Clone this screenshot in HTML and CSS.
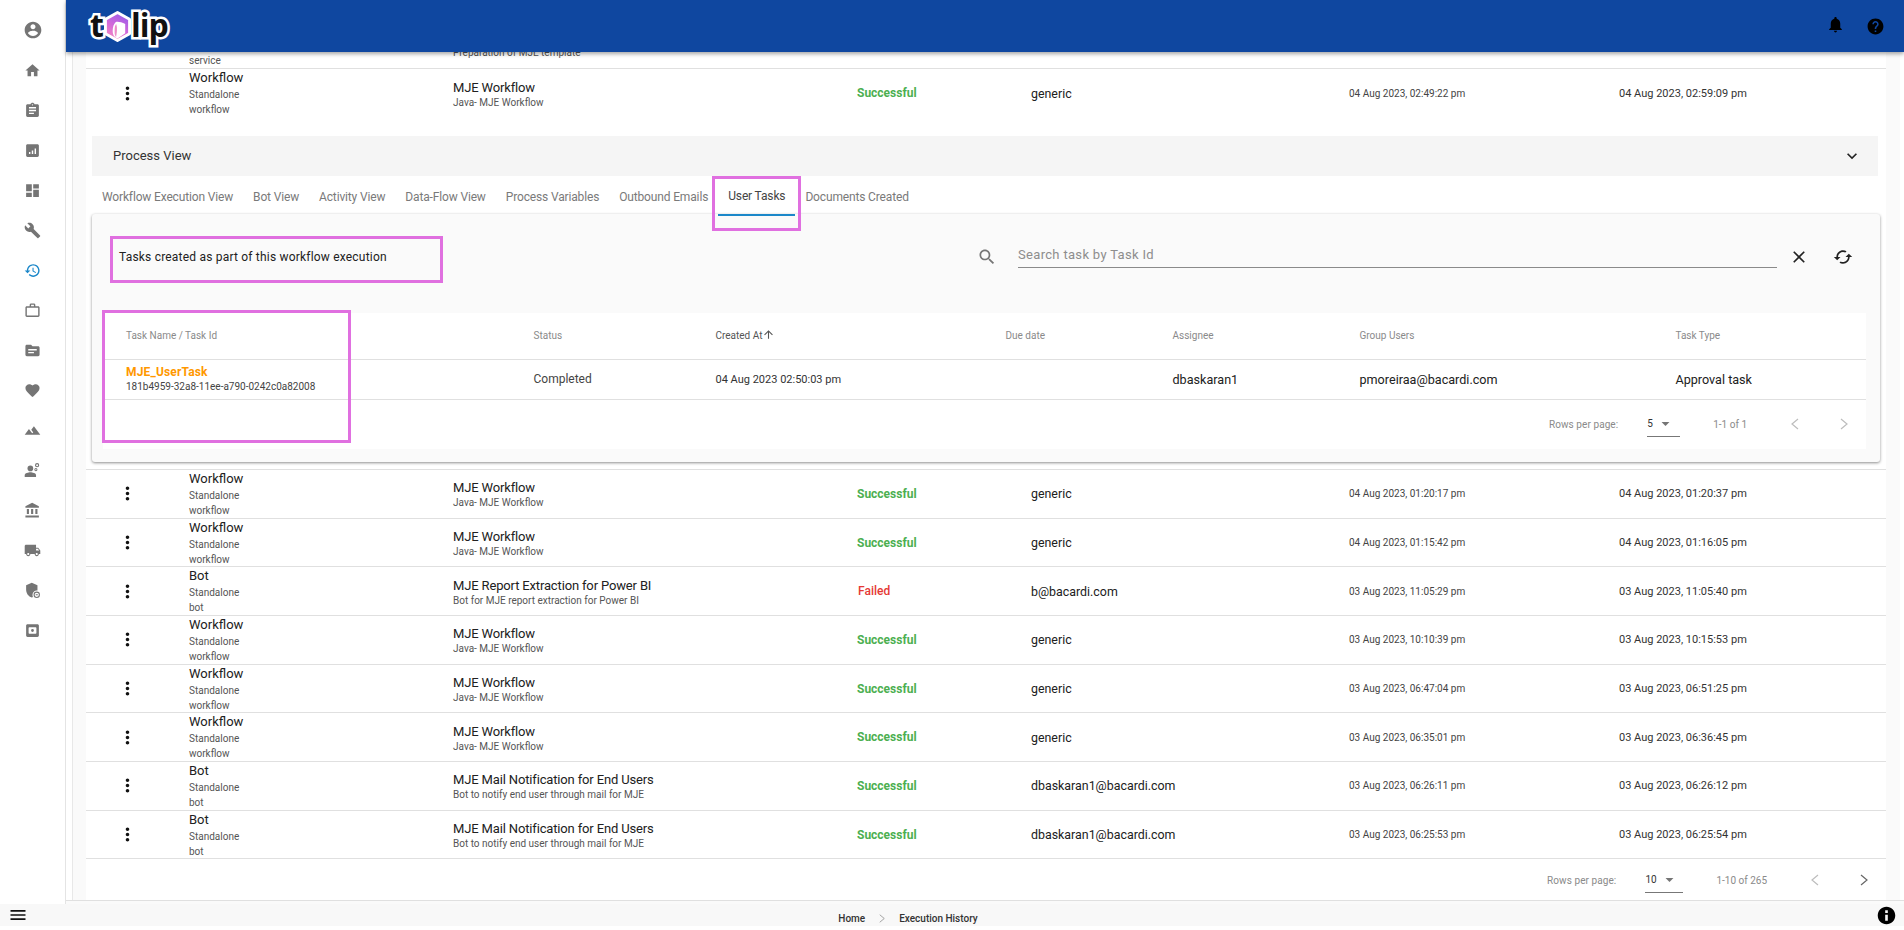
FILE: index.html
```html
<!DOCTYPE html>
<html lang="en">
<head>
<meta charset="utf-8">
<title>Execution History</title>
<link rel="stylesheet" href="styles.css">
</head>
<body>
<svg class="sprite" aria-hidden="true">
  <symbol id="i-more" viewBox="0 0 24 24"><path d="M12 8c1.1 0 2-.9 2-2s-.9-2-2-2-2 .9-2 2 .9 2 2 2zm0 2c-1.1 0-2 .9-2 2s.9 2 2 2 2-.9 2-2-.9-2-2-2zm0 6c-1.1 0-2 .9-2 2s.9 2 2 2 2-.9 2-2-.9-2-2-2z"/></symbol>
  <symbol id="i-arrow" viewBox="0 0 24 24"><path d="M7 10l5 5 5-5z"/></symbol>
</svg>

<div class="app">
  <nav class="sidebar">
    <a class="nav-item nav-first"><svg class="nav-icon nav-icon-lg" viewBox="0 0 24 24"><path d="M12 2C6.48 2 2 6.48 2 12s4.48 10 10 10 10-4.48 10-10S17.52 2 12 2zm0 3c1.66 0 3 1.34 3 3s-1.34 3-3 3-3-1.34-3-3 1.34-3 3-3zm0 14.2c-2.5 0-4.71-1.28-6-3.22.03-1.99 4-3.08 6-3.08 1.99 0 5.97 1.09 6 3.08-1.29 1.94-3.5 3.22-6 3.22z"/></svg></a>
    <a class="nav-item"><svg class="nav-icon" viewBox="0 0 24 24"><path d="M10 20v-6h4v6h5v-8h3L12 3 2 12h3v8z"/></svg></a>
    <a class="nav-item"><svg class="nav-icon" viewBox="0 0 24 24"><path d="M19 3h-4.18C14.4 1.84 13.3 1 12 1c-1.3 0-2.4.84-2.82 2H5c-1.1 0-2 .9-2 2v14c0 1.1.9 2 2 2h14c1.1 0 2-.9 2-2V5c0-1.1-.9-2-2-2zm-7 0c.55 0 1 .45 1 1s-.45 1-1 1-1-.45-1-1 .45-1 1-1zm2 14H7v-2h7v2zm3-4H7v-2h10v2zm0-4H7V7h10v2z"/></svg></a>
    <a class="nav-item"><svg class="nav-icon" viewBox="0 0 24 24"><path d="M19 3H5c-1.1 0-2 .9-2 2v14c0 1.1.9 2 2 2h14c1.1 0 2-.9 2-2V5c0-1.1-.9-2-2-2zM9 17H7v-3h2v3zm4 0h-2v-5h2v5zm4 0h-2V9h2v8z"/></svg></a>
    <a class="nav-item"><svg class="nav-icon" viewBox="0 0 24 24"><path d="M3 13h8V3H3v10zm0 8h8v-6H3v6zm10 0h8V11h-8v10zm0-18v6h8V3h-8z"/></svg></a>
    <a class="nav-item"><svg class="nav-icon" viewBox="0 0 24 24"><path d="M22.7 19l-9.1-9.1c.9-2.3.4-5-1.5-6.9-2-2-5-2.4-7.4-1.3L9 6 6 9 1.6 4.7C.4 7.1.9 10.1 2.9 12.1c1.9 1.9 4.6 2.4 6.9 1.5l9.1 9.1c.4.4 1 .4 1.4 0l2.3-2.3c.5-.4.5-1.1.1-1.4z"/></svg></a>
    <a class="nav-item nav-active"><svg class="nav-icon" viewBox="0 0 24 24"><path d="M13 3c-4.97 0-9 4.03-9 9H1l3.89 3.89.07.14L9 12H6c0-3.87 3.13-7 7-7s7 3.13 7 7-3.13 7-7 7c-1.93 0-3.68-.79-4.94-2.06l-1.42 1.42C8.27 19.99 10.51 21 13 21c4.97 0 9-4.03 9-9s-4.03-9-9-9zm-1 5v5l4.28 2.54.72-1.21-3.5-2.08V8H12z"/></svg></a>
    <a class="nav-item"><svg class="nav-icon" viewBox="0 0 24 24"><path d="M14 6V4h-4v2h4zM4 8v11h16V8H4zm16-2c1.11 0 2 .89 2 2v11c0 1.11-.89 2-2 2H4c-1.11 0-2-.89-2-2l.01-11c0-1.11.88-2 1.99-2h4V4c0-1.11.89-2 2-2h4c1.11 0 2 .89 2 2v2h4z"/></svg></a>
    <a class="nav-item"><svg class="nav-icon" viewBox="0 0 24 24"><path d="M20 6h-8l-2-2H4c-1.1 0-1.99.9-1.99 2L2 18c0 1.1.9 2 2 2h16c1.1 0 2-.9 2-2V8c0-1.1-.9-2-2-2zm-6 10H6v-2h8v2zm4-4H6v-2h12v2z"/></svg></a>
    <a class="nav-item"><svg class="nav-icon" viewBox="0 0 24 24"><path d="M12 21.35l-1.45-1.32C5.4 15.36 2 12.28 2 8.5 2 5.42 4.42 3 7.5 3c1.74 0 3.41.81 4.5 2.09C13.09 3.81 14.76 3 16.5 3 19.58 3 22 5.42 22 8.5c0 3.78-3.4 6.86-8.55 11.54L12 21.35z"/></svg></a>
    <a class="nav-item"><svg class="nav-icon" viewBox="0 0 24 24"><path d="M14 6l-3.75 5 2.85 3.8-1.6 1.2C9.81 13.75 7 10 7 10l-6 8h22L14 6z"/></svg></a>
    <a class="nav-item"><svg class="nav-icon" viewBox="0 0 24 24"><circle cx="9" cy="9" r="4"/><path d="M9 14.5c-2.67 0-8 1.34-8 4V21h16v-2.5c0-2.66-5.33-4-8-4z"/><path d="M18.5 1.5a3 3 0 100 6 3 3 0 000-6zm0 1.6a1.4 1.4 0 110 2.8 1.4 1.4 0 010-2.8zM16.8 8.5a2.2 2.2 0 100 4.4 2.2 2.2 0 000-4.4zm0 1.3a.9.9 0 110 1.8.9.9 0 010-1.8z"/></svg></a>
    <a class="nav-item"><svg class="nav-icon" viewBox="0 0 24 24"><path d="M4 10v7h3v-7H4zm6 0v7h3v-7h-3zM2 22h19v-3H2v3zm14-12v7h3v-7h-3zm-4.5-9L2 6v2h19V6l-9.5-5z"/></svg></a>
    <a class="nav-item"><svg class="nav-icon" viewBox="0 0 24 24"><path d="M20 8h-3V4H3c-1.1 0-2 .9-2 2v11h2c0 1.66 1.34 3 3 3s3-1.34 3-3h6c0 1.66 1.34 3 3 3s3-1.34 3-3h2v-5l-3-4zM6 18.5c-.83 0-1.5-.67-1.5-1.5s.67-1.5 1.5-1.5 1.5.67 1.5 1.5-.67 1.5-1.5 1.5zm13.5-9l1.96 2.5H17V9.5h2.5zm-1.5 9c-.83 0-1.5-.67-1.5-1.5s.67-1.5 1.5-1.5 1.5.67 1.5 1.5-.67 1.5-1.5 1.5z"/></svg></a>
    <a class="nav-item"><svg class="nav-icon" viewBox="0 0 24 24"><path d="M11 1L3 4.5V11c0 5 3.4 9.7 8 11 .6-.2 1.2-.4 1.7-.7A6 6 0 0112 18a6 6 0 017-5.9V4.500L11 1z"/><path d="M18 13.500a4.500 4.500 0 100 9 4.500 4.500 0 000-9zm0 1.500a3 3 0 110 6 3 3 0 010-6zm-1.500 2.300h3v1.400h-3z"/></svg></a>
    <a class="nav-item"><svg class="nav-icon" viewBox="0 0 24 24"><path fill-rule="evenodd" d="M5 3h14c1.100 0 2 .9 2 2v14c0 1.100-.9 2-2 2H5c-1.100 0-2-.9-2-2V5c0-1.100.9-2 2-2zm1.500 5.500v7c0 .6.400 1 1 1h9c.6 0 1-.4 1-1v-7c0-.6-.4-1-1-1h-9c-.6 0-1 .4-1 1zM12 10a2 2 0 110 4 2 2 0 010-4z"/></svg></a>
  </nav>

  <div class="main">
    <header class="topbar">
      <div class="logo">
        <span class="logo-text">t</span>
        <svg class="logo-mark" viewBox="0 0 28 32">
          <defs><linearGradient id="logo-grad" x1="0.7" y1="0" x2="0.2" y2="1"><stop offset="0" stop-color="#9a5bea"/><stop offset=".55" stop-color="#d66ad8"/><stop offset="1" stop-color="#f78cc0"/></linearGradient></defs>
          <path d="M14 1.500L26.500 8.500v15L14 30.500 1.500 23.500v-15z" fill="url(#logo-grad)" stroke="#fff" stroke-width="3" stroke-linejoin="round"/>
          <path d="M14 28.500c-3-1-5-3-5-8 0-4 1-7 3-9 2-1 6 0 10 2v9.500z" fill="#fff"/>
          <path d="M12.500 27c-1.500-1.500-1.500-4-1.500-7 0-3 .5-5 1.500-6.500 1 2 1.500 6 0 13.500z" fill="#ec8cc8"/>
        </svg>
        <span class="logo-text">lip</span>
      </div>
      <div class="topbar-actions">
        <svg class="bar-icon bar-icon-bell" viewBox="0 0 24 24"><path d="M12 22c1.100 0 2-.9 2-2h-4c0 1.100.89 2 2 2zm6-6v-5c0-3.070-1.640-5.640-4.500-6.320V4c0-.83-.67-1.500-1.500-1.500s-1.500.67-1.500 1.500v.68C7.630 5.360 6 7.920 6 11v5l-2 2v1h16v-1l-2-2z"/></svg>
        <svg class="bar-icon bar-icon-help" viewBox="0 0 24 24"><path d="M12 2C6.480 2 2 6.480 2 12s4.480 10 10 10 10-4.480 10-10S17.520 2 12 2zm1 17h-2v-2h2v2zm2.070-7.750l-.9.92C13.450 12.900 13 13.500 13 15h-2v-.5c0-1.100.45-2.100 1.170-2.830l1.240-1.260c.37-.36.59-.86.59-1.410 0-1.100-.9-2-2-2s-2 .9-2 2H8c0-2.210 1.790-4 4-4s4 1.790 4 4c0 .88-.36 1.680-.93 2.250z"/></svg>
      </div>
    </header>

    <div class="viewport">
      <div class="gutter">
        <section class="sheet">
          <div class="row row-clipped">
            <span></span>
            <p class="sub">service</p>
            <p class="sub sub-clipped">Preparation of MJE template</p>
          </div>

          <div class="row row-open">
            <button class="kebab"><svg viewBox="0 0 24 24"><use href="#i-more"/></svg></button>
            <div class="type"><p class="title">Workflow</p><p class="sub">Standalone workflow</p></div>
            <div class="name"><p class="title">MJE Workflow</p><p class="sub">Java- MJE Workflow</p></div>
            <span class="status ok">Successful</span>
            <span class="cell">generic</span>
            <span class="date">04 Aug 2023, 02:49:22 pm</span>
            <span class="date-end">04 Aug 2023, 02:59:09 pm</span>
          </div>

          <div class="detail">
            <div class="accordion">
              <span>Process View</span>
              <svg class="accordion-icon" viewBox="0 0 24 24"><path d="M16.590 8.590L12 13.170 7.410 8.590 6 10l6 6 6-6z"/></svg>
            </div>
            <div class="tabs">
              <span class="tab">Workflow Execution View</span>
              <span class="tab">Bot View</span>
              <span class="tab">Activity View</span>
              <span class="tab">Data-Flow View</span>
              <span class="tab">Process Variables</span>
              <span class="tab">Outbound Emails</span>
              <span class="tab tab-active">User Tasks<i class="mark mark-tab"></i></span>
              <span class="tab">Documents Created</span>
            </div>
            <div class="card">
              <i class="mark mark-heading"></i>
              <div class="card-head">
                <span class="card-title">Tasks created as part of this workflow execution</span>
                <svg class="search-icon" viewBox="0 0 24 24"><path d="M15.500 14h-.79l-.28-.27C15.410 12.590 16 11.110 16 9.500 16 5.910 13.090 3 9.500 3S3 5.910 3 9.500 5.910 16 9.500 16c1.610 0 3.090-.59 4.230-1.570l.27.28v.79l5 4.990L20.490 19l-4.990-5zm-6 0C7.010 14 5 11.990 5 9.500S7.010 5 9.500 5 14 7.010 14 9.500 11.990 14 9.500 14z"/></svg>
                <div class="search-field">Search task by Task Id</div>
                <svg class="close-icon" viewBox="0 0 24 24"><path d="M19 6.410L17.590 5 12 10.590 6.410 5 5 6.410 10.590 12 5 17.590 6.410 19 12 13.410 17.590 19 19 17.590 13.410 12z"/></svg>
                <svg class="sync-icon" viewBox="0 0 24 24"><path d="M12 4V1L8 5l4 4V6c3.310 0 6 2.690 6 6 0 1.010-.25 1.970-.7 2.800l1.460 1.460C19.540 15.030 20 13.570 20 12c0-4.420-3.580-8-8-8zm0 14c-3.310 0-6-2.690-6-6 0-1.010.25-1.970.7-2.800L5.240 7.740C4.460 8.970 4 10.430 4 12c0 4.420 3.580 8 8 8v3l4-4-4-4v3z"/></svg>
              </div>
              <div class="task-table">
                <i class="mark mark-column"></i>
                <div class="task-row task-head">
                  <span>Task Name / Task Id</span>
                  <span>Status</span>
                  <span class="sorted">Created At<svg class="sort-icon" viewBox="0 0 24 24"><path d="M4 12l1.410 1.410L11 7.830V20h2V7.830l5.580 5.590L20 12l-8-8-8 8z"/></svg></span>
                  <span>Due date</span>
                  <span>Assignee</span>
                  <span>Group Users</span>
                  <span>Task Type</span>
                </div>
                <div class="task-row task-body">
                  <div class="task-name"><p class="task-link">MJE_UserTask</p><p class="task-id">181b4959-32a8-11ee-a790-0242c0a82008</p></div>
                  <span>Completed</span>
                  <span class="task-date">04 Aug 2023 02:50:03 pm</span>
                  <span></span>
                  <span class="task-strong">dbaskaran1</span>
                  <span class="task-strong">pmoreiraa@bacardi.com</span>
                  <span class="task-strong">Approval task</span>
                </div>
                <div class="pager pager-task">
                  <span class="pager-label">Rows per page:</span>
                  <span class="pager-select pager-select-task">5<svg viewBox="0 0 24 24"><use href="#i-arrow"/></svg></span>
                  <span class="pager-range">1-1 of 1</span>
                  <svg class="pager-nav" viewBox="0 0 8 12"><polyline points="7,1 1,6 7,11"/></svg>
                  <svg class="pager-nav" viewBox="0 0 8 12"><polyline points="1,1 7,6 1,11"/></svg>
                </div>
              </div>
            </div>
          </div>

          <div class="row">
            <button class="kebab"><svg viewBox="0 0 24 24"><use href="#i-more"/></svg></button>
            <div class="type"><p class="title">Workflow</p><p class="sub">Standalone workflow</p></div>
            <div class="name"><p class="title">MJE Workflow</p><p class="sub">Java- MJE Workflow</p></div>
            <span class="status ok">Successful</span>
            <span class="cell">generic</span>
            <span class="date">04 Aug 2023, 01:20:17 pm</span>
            <span class="date-end">04 Aug 2023, 01:20:37 pm</span>
          </div>
          <div class="row">
            <button class="kebab"><svg viewBox="0 0 24 24"><use href="#i-more"/></svg></button>
            <div class="type"><p class="title">Workflow</p><p class="sub">Standalone workflow</p></div>
            <div class="name"><p class="title">MJE Workflow</p><p class="sub">Java- MJE Workflow</p></div>
            <span class="status ok">Successful</span>
            <span class="cell">generic</span>
            <span class="date">04 Aug 2023, 01:15:42 pm</span>
            <span class="date-end">04 Aug 2023, 01:16:05 pm</span>
          </div>
          <div class="row">
            <button class="kebab"><svg viewBox="0 0 24 24"><use href="#i-more"/></svg></button>
            <div class="type"><p class="title">Bot</p><p class="sub">Standalone bot</p></div>
            <div class="name"><p class="title">MJE Report Extraction for Power BI</p><p class="sub">Bot for MJE report extraction for Power BI</p></div>
            <span class="status bad">Failed</span>
            <span class="cell">b@bacardi.com</span>
            <span class="date">03 Aug 2023, 11:05:29 pm</span>
            <span class="date-end">03 Aug 2023, 11:05:40 pm</span>
          </div>
          <div class="row">
            <button class="kebab"><svg viewBox="0 0 24 24"><use href="#i-more"/></svg></button>
            <div class="type"><p class="title">Workflow</p><p class="sub">Standalone workflow</p></div>
            <div class="name"><p class="title">MJE Workflow</p><p class="sub">Java- MJE Workflow</p></div>
            <span class="status ok">Successful</span>
            <span class="cell">generic</span>
            <span class="date">03 Aug 2023, 10:10:39 pm</span>
            <span class="date-end">03 Aug 2023, 10:15:53 pm</span>
          </div>
          <div class="row">
            <button class="kebab"><svg viewBox="0 0 24 24"><use href="#i-more"/></svg></button>
            <div class="type"><p class="title">Workflow</p><p class="sub">Standalone workflow</p></div>
            <div class="name"><p class="title">MJE Workflow</p><p class="sub">Java- MJE Workflow</p></div>
            <span class="status ok">Successful</span>
            <span class="cell">generic</span>
            <span class="date">03 Aug 2023, 06:47:04 pm</span>
            <span class="date-end">03 Aug 2023, 06:51:25 pm</span>
          </div>
          <div class="row">
            <button class="kebab"><svg viewBox="0 0 24 24"><use href="#i-more"/></svg></button>
            <div class="type"><p class="title">Workflow</p><p class="sub">Standalone workflow</p></div>
            <div class="name"><p class="title">MJE Workflow</p><p class="sub">Java- MJE Workflow</p></div>
            <span class="status ok">Successful</span>
            <span class="cell">generic</span>
            <span class="date">03 Aug 2023, 06:35:01 pm</span>
            <span class="date-end">03 Aug 2023, 06:36:45 pm</span>
          </div>
          <div class="row">
            <button class="kebab"><svg viewBox="0 0 24 24"><use href="#i-more"/></svg></button>
            <div class="type"><p class="title">Bot</p><p class="sub">Standalone bot</p></div>
            <div class="name"><p class="title">MJE Mail Notification for End Users</p><p class="sub">Bot to notify end user through mail for MJE</p></div>
            <span class="status ok">Successful</span>
            <span class="cell">dbaskaran1@bacardi.com</span>
            <span class="date">03 Aug 2023, 06:26:11 pm</span>
            <span class="date-end">03 Aug 2023, 06:26:12 pm</span>
          </div>
          <div class="row">
            <button class="kebab"><svg viewBox="0 0 24 24"><use href="#i-more"/></svg></button>
            <div class="type"><p class="title">Bot</p><p class="sub">Standalone bot</p></div>
            <div class="name"><p class="title">MJE Mail Notification for End Users</p><p class="sub">Bot to notify end user through mail for MJE</p></div>
            <span class="status ok">Successful</span>
            <span class="cell">dbaskaran1@bacardi.com</span>
            <span class="date">03 Aug 2023, 06:25:53 pm</span>
            <span class="date-end">03 Aug 2023, 06:25:54 pm</span>
          </div>

          <div class="pager pager-main">
            <span class="pager-label">Rows per page:</span>
            <span class="pager-select pager-select-main">10<svg viewBox="0 0 24 24"><use href="#i-arrow"/></svg></span>
            <span class="pager-range">1-10 of 265</span>
            <svg class="pager-nav" viewBox="0 0 8 12"><polyline points="7,1 1,6 7,11"/></svg>
            <svg class="pager-nav pager-nav-on" viewBox="0 0 8 12"><polyline points="1,1 7,6 1,11"/></svg>
          </div>
        </section>
      </div>
    </div>
    <div class="main-foot"></div>
  </div>
</div>

<footer class="footer">
  <svg class="menu-icon" viewBox="0 0 24 24"><path d="M3 18h18v-2H3v2zm0-5h18v-2H3v2zm0-7v2h18V6H3z"/></svg>
  <nav class="crumbs">
    <span>Home</span>
    <svg class="crumb-sep" viewBox="0 0 8 12"><polyline points="1,1 7,6 1,11"/></svg>
    <span>Execution History</span>
  </nav>
  <svg class="info-icon" viewBox="0 0 24 24"><path d="M12 2C6.480 2 2 6.480 2 12s4.480 10 10 10 10-4.480 10-10S17.520 2 12 2zm1.500 16h-3v-7h3v7zm0-9h-3V6h3v3z"/></svg>
</footer>
</body>
</html>
```

FILE: styles.css
```css
* { box-sizing: border-box; }

html, body {
  margin: 0;
  height: 930px;
  overflow: hidden;
  background: #fff;
  font-family: Roboto, "Liberation Sans", sans-serif;
  color: #212121;
}

p { margin: 0; }

.sprite { display: none; }

.app {
  display: grid;
  grid-template-columns: 66px 1fr;
  height: 904px;
}

/* Sidebar */
.sidebar {
  display: flex;
  flex-direction: column;
  padding-top: 9px;
  background: #fff;
  border-right: 1px solid #e4e4e4;
}

.nav-item {
  display: flex;
  flex: 0 0 40.07px;
  align-items: center;
  justify-content: center;
  color: #757575;
}

.nav-first { flex-basis: 41px; }

.nav-active { color: #1b87c9; }

.nav-icon {
  width: 17px;
  height: 17px;
  fill: currentColor;
}

.nav-icon-lg {
  width: 20px;
  height: 20px;
}

/* Main */
.main {
  display: flex;
  flex-direction: column;
  min-width: 0;
}

.topbar {
  position: relative;
  z-index: 2;
  display: flex;
  flex: 0 0 52px;
  align-items: center;
  justify-content: space-between;
  padding: 0 19px 0 24px;
  background: #0f47a0;
  box-shadow: 0 2px 4px rgba(0, 0, 0, .35);
}

.logo {
  display: flex;
  align-items: center;
  height: 52px;
  margin-top: -2px;
}

.logo-text {
  font-family: "Open Sans", Roboto, sans-serif;
  font-size: 32px;
  font-weight: 700;
  line-height: 36px;
  color: #111;
  letter-spacing: -1px;
  -webkit-text-stroke: 5px #fff;
  paint-order: stroke fill;
}

.logo-mark {
  position: relative;
  z-index: 1;
  width: 27px;
  height: 31px;
  margin: 3px 0 0 1px;
}

.topbar-actions {
  display: flex;
  align-items: center;
  gap: 21px;
}

.bar-icon {
  width: 19px;
  height: 19px;
  fill: #000;
}

.bar-icon-bell { margin-top: -4px; }

.bar-icon-help { margin-top: 1px; }

.viewport {
  flex: 1;
  min-height: 0;
  padding: 0 4px 0 6px;
  overflow: hidden;
}

.gutter {
  height: 100%;
  padding: 0 14px 0 13px;
  background: #fafafa;
  border-left: 1px solid #e8e8e8;
}

.main-foot {
  flex: 0 0 4px;
  background: #fafafa;
  border-top: 1px solid #e0e0e0;
}

.sheet {
  width: 1800px;
  height: 848px;
  background: #fff;
}

/* Rows */
.row {
  display: grid;
  grid-template-columns: 103px 264px 404px 174px 318px 270px 1fr;
  align-items: center;
  height: 48.67px;
  border-bottom: 1px solid #e0e0e0;
}

.row-clipped {
  grid-template-rows: 16px;
  align-items: end;
  height: 17px;
  overflow: hidden;
}

.row-open { border-bottom: 0; }

.kebab {
  display: flex;
  align-items: center;
  justify-content: center;
  width: 21px;
  height: 21px;
  margin-left: 31px;
  padding: 0;
  border: 0;
  background: none;
  fill: #111;
}

.kebab svg {
  width: 21px;
  height: 21px;
}

.type .title {
  line-height: 18px;
}

.type .sub {
  width: 60px;
  line-height: 15px;
}

.name .title { letter-spacing: -.15px; }

.title {
  font-size: 13px;
  line-height: 16px;
  color: #212121;
}

.sub {
  font-size: 10px;
  line-height: 14px;
  color: #555;
}

.row-clipped .sub { line-height: 15px; }

.row-clipped .sub-clipped {
  padding-bottom: 8px;
  white-space: nowrap;
}

.name { padding-top: 3px; }

.status {
  font-size: 12px;
  font-weight: 700;
}

.ok { color: #4caf50; }

.bad {
  margin-left: 1px;
  color: #e53935;
  font-weight: 500;
}

.cell {
  font-size: 12.4px;
  color: #212121;
}

.date {
  font-size: 10px;
  color: #444;
}

.date-end {
  font-size: 11px;
  color: #333;
}

/* Expanded detail */
.detail {
  padding: 18.33px 6px 7px;
  border-bottom: 1px solid #e0e0e0;
}

.accordion {
  display: flex;
  align-items: center;
  justify-content: space-between;
  width: 1786px;
  height: 40px;
  padding: 0 16px 0 21px;
  background: #f5f5f5;
  font-size: 13px;
  color: #333;
}

.accordion-icon {
  width: 20px;
  height: 20px;
  fill: #222;
}

.tabs {
  position: relative;
  z-index: 2;
  display: flex;
  height: 38px;
}

.tab {
  position: relative;
  display: flex;
  align-items: center;
  height: 40px;
  padding: 2px 10px 0;
  font-size: 12px;
  letter-spacing: -.15px;
  color: #7a7a7a;
}

.tab-active {
  color: #444;
  border-bottom: 2px solid #1b87c9;
  padding-top: 3px;
}

.card {
  position: relative;
  z-index: 1;
  height: 248px;
  background: #fafafa;
  border-radius: 3px;
  box-shadow: 0 1px 3px rgba(0, 0, 0, .45);
}

.card-head {
  display: flex;
  align-items: center;
  height: 99px;
  padding: 0 26px 13px 27px;
}

.card-title {
  flex: 0 0 858px;
  font-size: 12px;
  letter-spacing: .2px;
  color: #212121;
}

.search-icon {
  flex: none;
  width: 20px;
  height: 20px;
  fill: #757575;
}

.search-field {
  flex: 0 0 759px;
  height: 26px;
  margin: -3px 12px 0 21px;
  padding-top: 5px;
  border-bottom: 1px solid #8a8a8a;
  font-size: 13px;
  line-height: 16px;
  letter-spacing: .32px;
  color: #8d8d8d;
}

.close-icon {
  flex: none;
  width: 20px;
  height: 20px;
  fill: #222;
}

.sync-icon {
  flex: none;
  width: 20px;
  height: 20px;
  margin-left: 24px;
  fill: #222;
  transform: rotate(90deg);
}

/* Inner task table */
.task-table {
  position: relative;
  width: 1763px;
  margin-left: 11px;
  background: #fff;
}

.task-row {
  display: grid;
  grid-template-columns: 407.5px 182px 290px 167px 187px 316px 1fr;
  align-items: center;
  padding-left: 23px;
  border-bottom: 1px solid #e0e0e0;
}

.task-head {
  height: 47px;
  font-size: 10px;
  color: #8a8a8a;
}

.sorted {
  display: flex;
  align-items: center;
  color: #555;
}

.sort-icon {
  width: 13px;
  height: 13px;
  margin-top: -2px;
  fill: #555;
}

.task-body {
  height: 40px;
  font-size: 12px;
  color: #444;
}

.task-link {
  font-size: 12px;
  line-height: 16px;
  font-weight: 700;
  letter-spacing: .15px;
  color: #ff9800;
}

.task-id {
  font-size: 10px;
  line-height: 14px;
  color: #444;
}

.task-date {
  font-size: 11px;
  color: #333;
}

.task-strong {
  font-size: 12.6px;
  color: #212121;
}

/* Pagination */
.pager {
  display: flex;
  align-items: center;
  justify-content: flex-end;
  font-size: 10px;
  color: #8a8a8a;
}

.pager-task {
  height: 49px;
  padding-right: 18px;
}

.pager-main {
  height: 42px;
  padding-right: 18px;
}

.pager-label { letter-spacing: .08px; }

.pager-select {
  display: flex;
  align-items: center;
  height: 26px;
  border-bottom: 1px solid #777;
  color: #333;
  fill: #757575;
}

.pager-select svg {
  width: 19px;
  height: 19px;
}

.pager-select-task {
  width: 33px;
  margin: 0 33px 0 29px;
  gap: 3px;
}

.pager-select-main {
  width: 38px;
  margin: 0 33px 0 29px;
  gap: 3px;
}

.pager-range { margin-right: 44px; }

.pager-nav {
  width: 8px;
  height: 12px;
  margin: 0 20px 0 0;
  fill: none;
  stroke: #bdbdbd;
  stroke-width: 1.2;
}

.pager-nav:last-child {
  margin-right: 0;
  margin-left: 21px;
}

.pager-nav-on { stroke: #666; }

/* Footer */
.footer {
  display: grid;
  grid-template-columns: 1fr auto 1fr;
  align-items: center;
  height: 22px;
  padding: 0 7px 0 8px;
  background: #f8f8f8;
}

.menu-icon {
  width: 20px;
  height: 20px;
  fill: #111;
}

.crumbs {
  display: flex;
  align-items: center;
  gap: 14px;
  margin-right: 89px;
  padding-top: 6px;
  font-size: 10px;
  font-weight: 500;
  color: #333;
}

.crumb-sep {
  width: 6px;
  height: 9px;
  fill: none;
  stroke: #888;
  stroke-width: 1;
}

.info-icon {
  justify-self: end;
  width: 21px;
  height: 21px;
  fill: #000;
}

/* Review annotations drawn over the UI */
.mark {
  position: absolute;
  z-index: 3;
  display: block;
  border: 3px solid #e070e0;
  pointer-events: none;
}

.mark-tab {
  top: 0;
  left: -6px;
  width: 89px;
  height: 55px;
}

.mark-heading {
  top: 22px;
  left: 18px;
  width: 333px;
  height: 47px;
}

.mark-column {
  top: -3px;
  left: -1px;
  width: 249px;
  height: 133px;
}
```
